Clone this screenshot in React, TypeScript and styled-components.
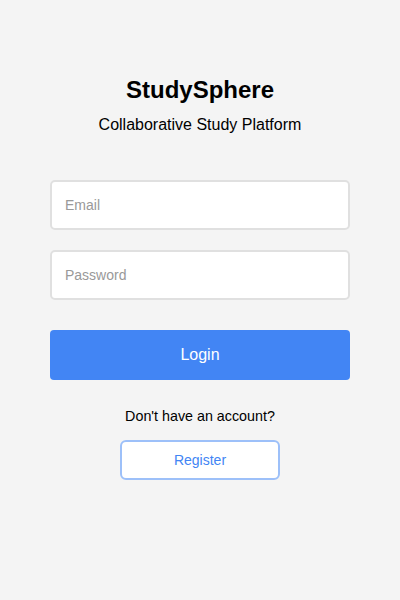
import React from "react";
import styled, { createGlobalStyle } from "styled-components";

const GlobalStyle = createGlobalStyle`
  html, body {
    margin: 0;
    padding: 0;
    background: #f4f4f4;
    font-family: "Liberation Sans", Arial, sans-serif;
  }
  * { box-sizing: border-box; }
`;

const Page = styled.div`
  width: 400px;
  height: 600px;
  background: #f4f4f4;
  display: flex;
  flex-direction: column;
  align-items: center;
  padding-top: 76px;
`;

const Title = styled.h1`
  margin: 0;
  font-size: 24px;
  line-height: 28px;
  font-weight: 700;
  color: #000;
`;

const Subtitle = styled.p`
  margin: 11px 0 0;
  font-size: 16px;
  line-height: 20px;
  color: #000;
`;

const Form = styled.form`
  width: 300px;
  margin-top: 45px;
  display: flex;
  flex-direction: column;
  gap: 20px;
`;

const Input = styled.input`
  width: 100%;
  height: 50px;
  border: 2px solid #e0e0e0;
  border-radius: 5px;
  background: #fff;
  padding: 0 13px;
  font-family: "Liberation Sans", Arial, sans-serif;
  font-size: 14px;
  color: #000;
  outline: none;
  &::placeholder { color: #999; }
`;

const LoginButton = styled.button`
  margin-top: 10px;
  width: 100%;
  height: 50px;
  border: none;
  border-radius: 4px;
  background: #4285f4;
  color: #fff;
  font-family: "Liberation Sans", Arial, sans-serif;
  font-size: 16px;
  cursor: pointer;
`;

const Prompt = styled.p`
  margin: 28px 0 0;
  font-size: 14.3px;
  line-height: 16px;
  color: #000;
`;

const RegisterButton = styled.button`
  margin-top: 16px;
  width: 160px;
  height: 40px;
  border: 2px solid #9dc0f9;
  border-radius: 6px;
  background: #fff;
  color: #4285f4;
  font-family: "Liberation Sans", Arial, sans-serif;
  font-size: 14px;
  cursor: pointer;
`;

export default function App() {
  return (
    <>
      <GlobalStyle />
      <Page>
        <Title>StudySphere</Title>
        <Subtitle>Collaborative Study Platform</Subtitle>
        <Form onSubmit={(e) => e.preventDefault()}>
          <Input type="email" placeholder="Email" />
          <Input type="password" placeholder="Password" />
          <LoginButton type="submit">Login</LoginButton>
        </Form>
        <Prompt>Don't have an account?</Prompt>
        <RegisterButton type="button">Register</RegisterButton>
      </Page>
    </>
  );
}
